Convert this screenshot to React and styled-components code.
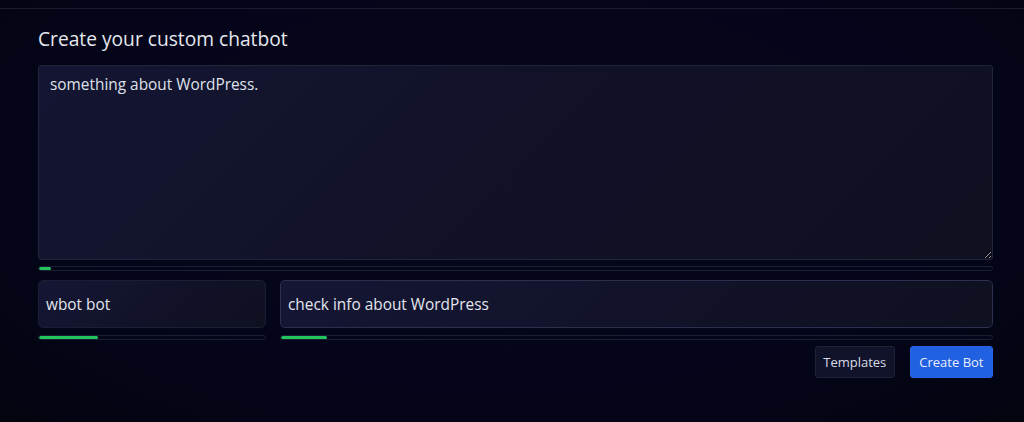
import React from "react";
import styled, { createGlobalStyle } from "styled-components";

const Global = createGlobalStyle`
  html, body { margin: 0; padding: 0; background: #03040f; }
  body { font-family: "Open Sans", "Noto Sans", sans-serif; color: #e5e7eb; }
  * { box-sizing: border-box; }
`;

const Page = styled.div`
  min-height: 422px;
  background: radial-gradient(ellipse at 50% 40%, #070819 0%, #04051a 60%, #03040f 100%);
`;

const TopBar = styled.div`
  height: 9px;
  border-bottom: 1px solid #1b1d2e;
`;

const Main = styled.main`
  padding: 17px 31px 0 38px;
  display: flex;
  flex-direction: column;
`;

const Title = styled.h1`
  margin: 0 0 13px;
  font-size: 19.2px;
  font-weight: 400;
  line-height: 26px;
  color: #e6e8ee;
`;

const TextArea = styled.textarea`
  display: block;
  width: 100%;
  height: 195px;
  padding: 8px 11px;
  border: 1px solid #22243a;
  border-radius: 3px;
  background: linear-gradient(135deg, #141532 0%, #111228 50%, #0f1020 100%);
  color: #dfe2ea;
  font-family: inherit;
  font-size: 15.4px;
  line-height: 22px;
  outline: none;
`;

const Track = styled.div`
  height: 5px;
  margin-top: ${(p) => p.$mt || 6}px;
  border: 1px solid #1c1e33;
  border-radius: 3px;
  background: #05061a;
  overflow: hidden;
`;

const Fill = styled.div`
  height: 100%;
  background: #22c55e;
  border-radius: 3px;
`;

const Row = styled.div`
  display: grid;
  grid-template-columns: 228px 1fr;
  column-gap: 14px;
  margin-top: 9px;
`;

const Field = styled.div`
  display: flex;
  flex-direction: column;
`;

const Input = styled.input`
  height: 48px;
  width: 100%;
  padding: 0 7px;
  border: 1px solid ${(p) => (p.$focused ? "#2c2f4d" : "#1c1e33")};
  border-radius: 5px;
  background: linear-gradient(135deg, #151634 0%, #111228 60%, #0f1020 100%);
  color: #e3e6ee;
  font-family: inherit;
  font-size: 15.4px;
  outline: none;
  caret-color: #e3e6ee;
`;

const Actions = styled.div`
  display: flex;
  justify-content: flex-end;
  gap: 15px;
  margin-top: 6px;
`;

const Button = styled.button`
  height: 32px;
  padding: 0 ${(p) => (p.$primary ? 8.5 : 7.5)}px;
  border: 1px solid ${(p) => (p.$primary ? "#2563eb" : "#1f2138")};
  border-radius: 3px;
  background: ${(p) => (p.$primary ? "#2160e0" : "#11132b")};
  color: ${(p) => (p.$primary ? "#e8eefc" : "#d9dce6")};
  font-family: inherit;
  font-size: 13px;
  cursor: pointer;
`;

const Bar = ({ pct, mt }) => (
  <Track $mt={mt}>
    <Fill style={{ width: `${pct}%` }} />
  </Track>
);

export default function App() {
  return (
    <Page>
      <Global />
      <TopBar />
      <Main>
        <Title>Create your custom chatbot</Title>
        <TextArea defaultValue="something about WordPress." />
        <Bar pct={1.3} mt={6} />
        <Row>
          <Field>
            <Input defaultValue="wbot bot" />
            <Bar pct={26} mt={7} />
          </Field>
          <Field>
            <Input $focused defaultValue="check info about WordPress" autoFocus />
            <Bar pct={6.5} mt={7} />
          </Field>
        </Row>
        <Actions>
          <Button>Templates</Button>
          <Button $primary>Create Bot</Button>
        </Actions>
      </Main>
    </Page>
  );
}
